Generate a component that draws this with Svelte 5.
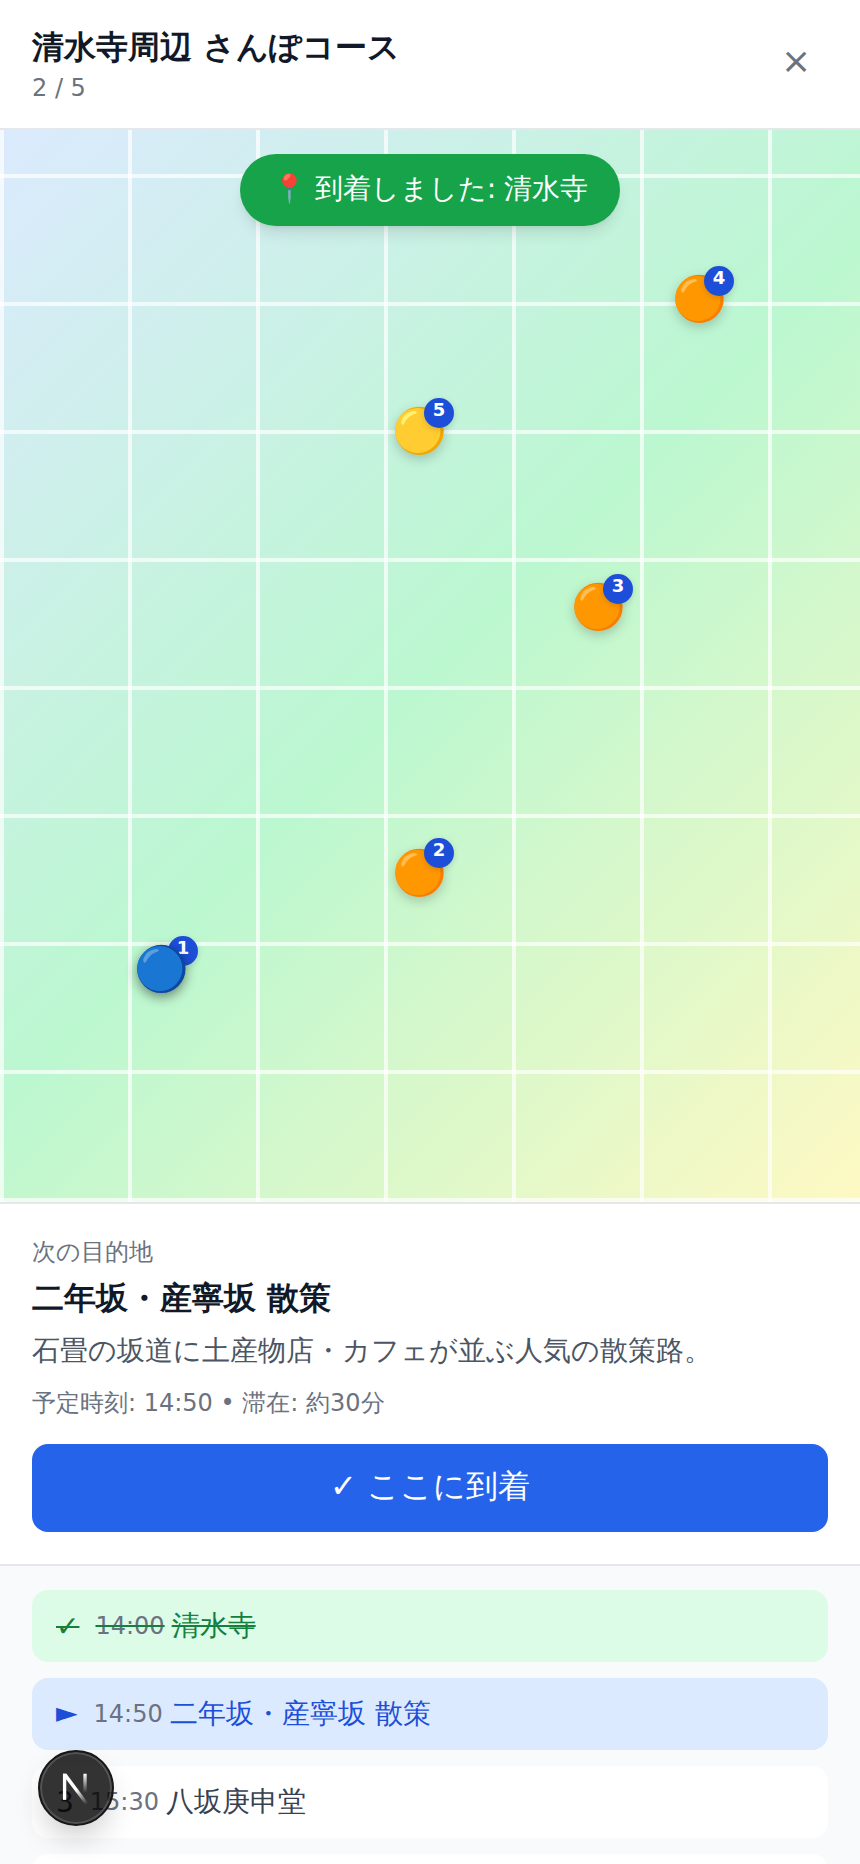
<script>
  const pins = [
    { n: 1, x: 161, y: 969, e: '🔵', now: true },
    { n: 2, x: 419, y: 873, e: '🟠', lift: true },
    { n: 3, x: 598, y: 607, e: '🟠' },
    { n: 4, x: 699, y: 299, e: '🟠' },
    { n: 5, x: 419, y: 431, e: '🟡' }
  ];
  const mapTop = 130;
  const stops = [
    { icon: '✓', time: '14:00', name: '清水寺', state: 'done' },
    { icon: '►', time: '14:50', name: '二年坂・産寧坂 散策', state: 'active' },
    { icon: '3', time: '15:30', name: '八坂庚申堂', state: '' },
    { icon: '4', time: '16:10', name: '高台寺', state: '' }
  ];
</script>

<div class="page">
  <header class="top">
    <div>
      <h1>清水寺周辺 さんぽコース</h1>
      <p class="count">2 / 5</p>
    </div>
    <button class="close" aria-label="閉じる">×</button>
  </header>

  <section class="map">
    <div class="toast">📍 到着しました: 清水寺</div>
    {#each pins as p}
      <div class="pin" class:now={p.now} class:lift={p.lift} style="left:{p.x}px;top:{p.y - mapTop}px">
        <span class="dot">{p.e}</span>
        <span class="num">{p.n}</span>
      </div>
    {/each}
  </section>

  <section class="next">
    <p class="label">次の目的地</p>
    <h2>二年坂・産寧坂 散策</h2>
    <p class="desc">石畳の坂道に土産物店・カフェが並ぶ人気の散策路。</p>
    <p class="meta">予定時刻: 14:50 • 滞在: 約30分</p>
    <button class="arrive">✓ ここに到着</button>
  </section>

  <ul class="stops">
    {#each stops as s}
      <li class={s.state}>
        <span class="icon">{s.icon}</span>
        <span class="time">{s.time}</span>
        <span class="name">{s.name}</span>
      </li>
    {/each}
  </ul>

  <div class="devtool" aria-label="Next.js">
    <svg viewBox="0 0 32 32" width="38" height="38" aria-hidden="true">
      <defs>
        <linearGradient id="nd" x1="8" y1="6" x2="27" y2="30" gradientUnits="userSpaceOnUse">
          <stop offset="0.45" stop-color="#fff" />
          <stop offset="0.95" stop-color="#fff" stop-opacity="0" />
        </linearGradient>
        <linearGradient id="nr" x1="0" y1="4" x2="0" y2="20" gradientUnits="userSpaceOnUse">
          <stop offset="0" stop-color="#fff" />
          <stop offset="1" stop-color="#fff" stop-opacity="0" />
        </linearGradient>
      </defs>
      <rect x="5" y="4" width="2.8" height="22" fill="#fff" />
      <path d="M5 4h3L26 28.5l-2 1.5L5.6 6z" fill="url(#nd)" />
      <rect x="22.2" y="4" width="2.8" height="18" fill="url(#nr)" />
    </svg>
  </div>
</div>

<style>
  :global(body) {
    margin: 0;
    background: #fff;
  }
  .page {
    position: relative;
    height: 1864px;
    overflow: hidden;
    display: flex;
    flex-direction: column;
    font-family: "DejaVu Sans", sans-serif;
    color: #111827;
  }
  .top {
    flex: none;
    height: 128px;
    box-sizing: content-box;
    border-bottom: 2px solid #e5e7eb;
    padding: 0 32px;
    display: flex;
    align-items: center;
    justify-content: space-between;
  }
  h1 {
    margin: 0 0 2px;
    font-size: 32px;
    line-height: 46px;
    font-weight: 700;
  }
  .count {
    margin: 0;
    font-size: 24px;
    line-height: 32px;
    color: #6b7280;
  }
  .close {
    border: 0;
    background: none;
    padding: 0;
    width: 64px;
    height: 64px;
    margin-bottom: 6px;
    font: inherit;
    font-size: 36px;
    line-height: 64px;
    color: #6b7280;
  }
  .map {
    flex: none;
    position: relative;
    height: 1072px;
    background-color: #bbf7d0;
    background-image:
      linear-gradient(rgba(255, 255, 255, 0.7) 4px, transparent 4px),
      linear-gradient(90deg, rgba(255, 255, 255, 0.7) 4px, transparent 4px),
      linear-gradient(135deg, #dbeafe 0%, #bbf7d0 50%, #fef9c3 100%);
    background-size: 128px 128px, 128px 128px, 100% 100%;
    background-position: 0 44px, 0 0, 0 0;
  }
  .toast {
    position: absolute;
    top: 24px;
    left: 240px;
    width: 380px;
    height: 72px;
    box-sizing: border-box;
    border-radius: 36px;
    background: #16a34a;
    color: #fff;
    font-size: 28px;
    line-height: 70px;
    word-spacing: -1.5px;
    text-align: center;
    white-space: nowrap;
    box-shadow: 0 10px 15px -3px rgba(0, 0, 0, 0.1), 0 4px 6px -4px rgba(0, 0, 0, 0.1);
  }
  .pin {
    position: absolute;
    width: 0;
    height: 0;
  }
  .dot {
    position: absolute;
    left: -40px;
    top: -40px;
    width: 80px;
    height: 80px;
    text-align: center;
    font-size: 44px;
    line-height: 80px;
    filter: drop-shadow(0 4px 6px rgba(0, 0, 0, 0.2));
  }
  .num {
    position: absolute;
    left: 5px;
    top: -33px;
    width: 30px;
    height: 30px;
    border-radius: 50%;
    background: #1d4ed8;
    color: #fff;
    font-size: 18px;
    font-weight: 700;
    line-height: 24px;
    text-align: center;
    box-shadow: 0 2px 6px rgba(0, 0, 0, 0.15);
  }
  .lift .num {
    top: -35px;
  }
  .now .num {
    left: 7px;
    top: -33px;
    z-index: -1;
  }
  .now {
    z-index: 1;
  }
  .now .dot {
    filter: drop-shadow(0 4px 6px rgba(0, 0, 0, 0.45));
  }
  .next {
    flex: none;
    border-top: 2px solid #e5e7eb;
    border-bottom: 2px solid #e5e7eb;
    padding: 32px;
    height: 364px;
    box-sizing: border-box;
    background: #fff;
  }
  .label {
    margin: 0;
    font-size: 24px;
    line-height: 32px;
    color: #6b7280;
  }
  h2 {
    margin: 8px 0 0;
    font-size: 32px;
    line-height: 44px;
    font-weight: 700;
  }
  .desc {
    margin: 9px 0 0;
    font-size: 28px;
    line-height: 44px;
    color: #4b5563;
  }
  .meta {
    margin: 14px 0 0;
    font-size: 24px;
    line-height: 32px;
    color: #6b7280;
  }
  .arrive {
    display: block;
    width: 100%;
    height: 88px;
    margin-top: 25px;
    padding: 0 0 2px;
    border: 0;
    border-radius: 16px;
    background: #2563eb;
    color: #fff;
    font: inherit;
    font-size: 32px;
  }
  .stops {
    flex: 1;
    margin: 0;
    padding: 24px 32px;
    list-style: none;
    background: #f9fafb;
    display: flex;
    flex-direction: column;
    gap: 16px;
  }
  .stops li {
    flex: none;
    height: 72px;
    box-sizing: border-box;
    padding: 0 24px;
    border-radius: 16px;
    background: #fff;
    display: flex;
    align-items: center;
    gap: 16px;
    font-size: 28px;
    color: #374151;
  }
  .time {
    font-size: 24px;
    color: #6b7280;
  }
  .name {
    margin-left: -9px;
  }
  .stops li.done {
    background: #dcfce7;
    color: #15803d;
    text-decoration: line-through;
  }
  .stops li.active {
    background: #dbeafe;
    color: #1d4ed8;
  }
  .active .icon {
    margin-top: -3px;
  }
  .devtool {
    position: absolute;
    left: 38px;
    top: 1750px;
    width: 76px;
    height: 76px;
    box-sizing: border-box;
    border-radius: 50%;
    background: rgba(0, 0, 0, 0.8);
    border: 2px solid #171717;
    box-shadow: inset 0 0 0 2px rgba(255, 255, 255, 0.16), 0 16px 32px -8px rgba(0, 0, 0, 0.24);
    display: flex;
    align-items: center;
    justify-content: center;
  }
</style>
